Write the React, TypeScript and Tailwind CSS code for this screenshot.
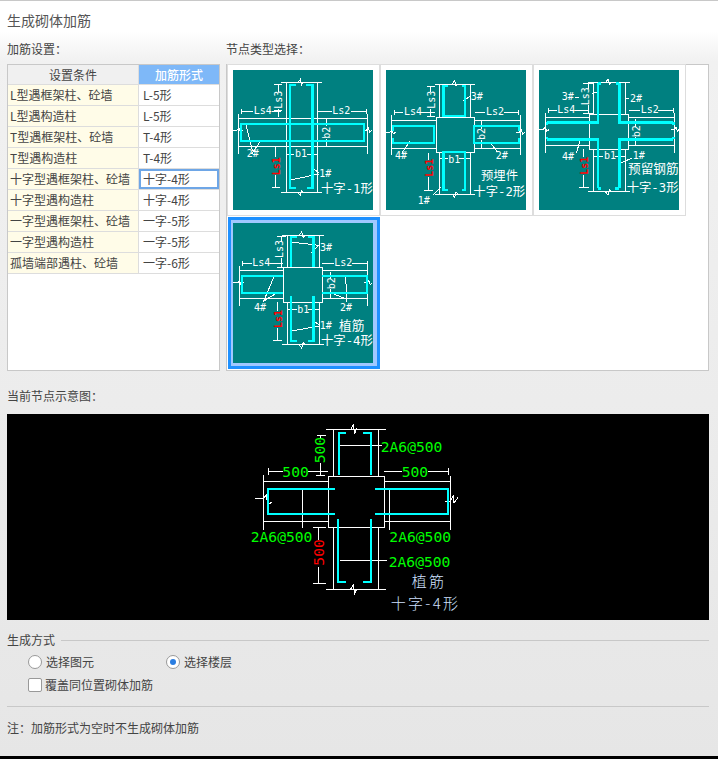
import React from 'react'

const rows = [
    ["L型遇框架柱、砼墙", "L-5形"],
    ["L型遇构造柱", "L-5形"],
    ["T型遇框架柱、砼墙", "T-4形"],
    ["T型遇构造柱", "T-4形"],
    ["十字型遇框架柱、砼墙", "十字-4形"],
    ["十字型遇构造柱", "十字-4形"],
    ["一字型遇框架柱、砼墙", "一字-5形"],
    ["一字型遇构造柱", "一字-5形"],
    ["孤墙端部遇柱、砼墙", "一字-6形"],
]

type Label = { t: string, x: number, y: number, c?: string, r?: boolean, s?: number }
type Node = { vb: string, white: string, cyan: string, labels: Label[] }

const nodes: Node[] = [
    {
        vb: "24 30 420 420",
        white: "M168 68H290M168 397H290M183 68V397M276 68V397M218 68L226 58L230 74L236 66M218 397L226 406L230 392L236 397M40 176H428M40 260H428M40 162V282M428 162V282M24 210H36L42 204L46 216L52 210M414 210H424L430 204L434 216L442 210M50 155H85M140 155H168M280 155H320M378 155H425M50 148V163M425 148V163M148 72H172M160 72V96M160 146V172M148 152H172M303 176V198M303 236V260M184 282H208M245 282H276M152 260V292M152 345V382M140 382H166M196 360L282 342M262 325L282 338M62 192L82 272M106 244L80 282",
        cyan: "M214 75H195V384H214M244 75H262V384H246M70 192H48V242H416V192H70",
        labels: [
            {t: "Ls4", x: 86, y: 162},
            {t: "Ls2", x: 322, y: 162},
            {t: "Ls3", x: 172, y: 146, r: true},
            {t: "b2", x: 316, y: 236, r: true},
            {t: "b1", x: 210, y: 292},
            {t: "Ls1", x: 166, y: 346, r: true, c: "#ff0000"},
            {t: "1#", x: 283, y: 350},
            {t: "2#", x: 65, y: 292},
            {t: "十字-1形", x: 288, y: 400, s: 37},
        ],
    },
    {
        vb: "18 30 420 420",
        white: "M168 172H284V278H168ZM165 72H285M165 402H285M178 72V172M272 72V172M178 278V402M272 278V402M216 72L224 62L228 78L234 72M216 402L224 412L228 396L234 402M34 180H168M34 264H168M284 180H422M284 264H422M34 166V284M422 166V284M18 216H30L36 210L40 222L48 216M408 216H418L424 210L428 222L436 216M44 158H70M124 158H165M284 158H316M372 158H416M44 150V166M416 150V166M140 78H166M152 78V96M152 146V170M140 170H166M303 180V206M303 240V264M178 296H204M236 296H272M146 278V300M146 350V390M132 390H160M248 124L272 108M184 380L160 405M90 244L66 278M330 246L352 276",
        cyan: "M204 78H190V168H255V78H246M204 390H190V276H255V390H246M50 198H162V248H50M50 198H38V212M50 248H38V234M405 198H282V248H405M405 198H416V212M405 248H416V234",
        labels: [
            {t: "Ls4", x: 72, y: 166},
            {t: "Ls2", x: 318, y: 166},
            {t: "Ls3", x: 164, y: 146, r: true},
            {t: "b2", x: 316, y: 240, r: true},
            {t: "b1", x: 205, y: 308},
            {t: "Ls1", x: 160, y: 350, r: true, c: "#ff0000"},
            {t: "3#", x: 272, y: 120},
            {t: "4#", x: 45, y: 298},
            {t: "2#", x: 347, y: 296},
            {t: "1#", x: 113, y: 432},
            {t: "预埋件", x: 303, y: 360, s: 37},
            {t: "十字-2形", x: 280, y: 408, s: 37},
        ],
    },
    {
        vb: "27 30 420 420",
        white: "M178 162H296V268H178ZM175 68H300M175 395H300M190 68V162M285 68V162M190 268V395M285 268V395M226 68L234 58L238 74L244 68M226 395L234 405L238 389L244 395M47 172H178M47 255H178M296 172H433M296 255H433M47 160V278M433 160V278M27 208H40L46 202L50 214L58 208M422 208H432L438 202L442 214L448 208M54 152H80M134 152H175M298 152H330M385 152H430M54 144V160M430 144V160M160 70H190M176 70V86M176 136V162M160 160H190M316 176V200M316 232V255M190 288H220M256 288H285M160 268V292M160 344V382M146 382H176M136 112H146M186 100L204 96M286 116H298M140 278L150 240M270 310L306 294",
        cyan: "M203 70V187H50M268 70V187H430M50 238H203V385M430 238H268V385M203 70H212M258 70H268M50 187V196M50 238V230M430 187V196M430 238V230M203 385H214M268 385H256",
        labels: [
            {t: "Ls4", x: 82, y: 160},
            {t: "Ls2", x: 332, y: 160},
            {t: "Ls3", x: 178, y: 136, r: true},
            {t: "b2", x: 329, y: 232, r: true},
            {t: "b1", x: 222, y: 298},
            {t: "Ls1", x: 174, y: 344, r: true, c: "#ff0000"},
            {t: "3#", x: 95, y: 120},
            {t: "2#", x: 300, y: 126},
            {t: "4#", x: 96, y: 300},
            {t: "1#", x: 308, y: 296},
            {t: "预留钢筋", x: 294, y: 340, s: 38},
            {t: "十字-3形", x: 290, y: 396, s: 37},
        ],
    },
    {
        vb: "24 33 420 420",
        white: "M175 165H292V270H175ZM172 70H296M172 397H296M187 70V165M282 70V165M187 270V397M282 270V397M222 70L230 60L234 76L240 70M222 397L230 408L234 392L240 397M42 175H175M42 258H175M292 175H428M292 258H428M42 162V282M428 162V282M24 212H38L44 206L48 218L56 212M416 212H426L432 206L436 218L442 212M52 155H80M134 155H175M292 155H326M382 155H426M52 147V163M426 147V163M155 72H182M168 72V90M168 138V165M155 165H182M316 180V200M316 232V258M187 292H216M250 292H282M158 270V296M158 348V386M144 386H172M196 90L282 100M258 122L282 100M196 358L282 342M262 325L282 338M146 196L115 270M150 246L115 268M316 242L366 262M362 196L366 270",
        cyan: "M215 74H198V165M248 74H265V165M175 192H50V242H175M292 192H425V242H292M198 252V386H215M265 252V386H250",
        labels: [
            {t: "Ls4", x: 82, y: 162},
            {t: "Ls2", x: 328, y: 162},
            {t: "Ls3", x: 174, y: 138, r: true},
            {t: "b2", x: 329, y: 232, r: true},
            {t: "b1", x: 217, y: 302},
            {t: "Ls1", x: 172, y: 348, r: true, c: "#ff0000"},
            {t: "3#", x: 285, y: 116},
            {t: "4#", x: 87, y: 296},
            {t: "2#", x: 345, y: 296},
            {t: "1#", x: 284, y: 350},
            {t: "植筋", x: 342, y: 354, s: 38},
            {t: "十字-4形", x: 288, y: 400, s: 37},
        ],
    },
]

function Diagram({node}: { node: Node }) {
    return (
        <svg viewBox={node.vb} width={140} height={140} className="block bg-[#008080] font-['DejaVu_Sans_Mono','Noto_Sans_CJK_SC',monospace]">
            <path d={node.white} fill="none" stroke="#ffffff" strokeWidth={3} shapeRendering="crispEdges"/>
            <path d={node.cyan} fill="none" stroke="#00ffff" strokeWidth={7} shapeRendering="crispEdges"/>
            {node.labels.map((l) => (
                <text
                    key={l.t}
                    x={l.x}
                    y={l.y}
                    fill={l.c ?? "#ffffff"}
                    fontSize={l.s ?? 30}
                    fontWeight={l.c ? "bold" : "normal"}
                    transform={l.r ? `rotate(-90 ${l.x} ${l.y})` : undefined}
                >{l.t}</text>
            ))}
        </svg>
    )
}

function Preview() {
    return (
        <svg viewBox="0 0 750 615" width={250} height={205} className="block ml-[223px] font-['DejaVu_Sans_Mono',monospace]">
            <path
                d="M295 183H463V338H295ZM288 43H468M288 522H468M310 43V183M445 43V183M310 338V522M445 338V522M362 43L370 30L374 58L380 40M362 522L370 510L374 536L380 522M100 198H295M100 320H295M463 198H662M463 320H662M100 180V345M662 182V345M76 250H100L110 240L112 268L126 262M646 258H662L670 240L672 264L684 248M325 90H455M218 222V340M478 225V345M330 436H470M115 168H158M115 158V180M235 168H295M463 168H515M595 168H655M655 158V180M262 62H288M272 62V72M272 145V180M258 180H285M248 338H288M265 338V375M265 455V505M248 505H288"
                fill="none" stroke="#ffffff" strokeWidth={3} shapeRendering="crispEdges"/>
            <path
                d="M348 55H328V180M400 55H423V180M315 222H115V298H315M435 222H655V298H435M325 312V502H348M423 312V502H400"
                fill="none" stroke="#00ffff" strokeWidth={6} shapeRendering="crispEdges"/>
            <g fill="#00ff00" fontSize={44}>
                <text x={452} y={112}>2A6@500</text>
                <text x={62} y={382}>2A6@500</text>
                <text x={478} y={380}>2A6@500</text>
                <text x={476} y={456}>2A6@500</text>
                <text x={157} y={185}>500</text>
                <text x={515} y={187}>500</text>
                <text x={286} y={145} transform="rotate(-90 286 145)">500</text>
            </g>
            <text x={281} y={452} fill="#ff0000" fontSize={44} transform="rotate(-90 281 452)">500</text>
            <text x={545} y={516} fill="#cfe0ff" fontSize={45} letterSpacing={7} className="font-['Noto_Sans_CJK_SC',sans-serif] font-light">植筋</text>
            <text x={482} y={582} fill="#cfe0ff" fontSize={45} letterSpacing={7} className="font-['Noto_Sans_CJK_SC',sans-serif] font-light">十字-4形</text>
        </svg>
    )
}

export default function App() {
    return (
        <div className="w-[718px] h-[759px] flex flex-col overflow-hidden text-[12px] text-[#444] border-t border-[#c8c8c8] bg-[linear-gradient(180deg,#ffffff_0px,#ffffff_30px,#f1f1f1_60px,#ececec_400px,#e6e6e6_759px)] font-['Noto_Sans_CJK_SC','Noto_Sans',sans-serif]">

            <div className="h-[38px] px-[7px] flex items-center text-[14px] text-[#555]">生成砌体加筋</div>

            <div className="flex pl-[7px] pr-[9px] gap-[6px]">
                <div className="w-[213px] flex flex-col">
                    <div className="h-[25px] leading-[20px]">加筋设置：</div>
                    <div className="h-[307px] bg-white border border-[#c8c8c8]">
                        <div className="flex h-[20px] leading-[20px] border-b border-[#ddd] text-center">
                            <div className="w-[131px] bg-[#f0f0f0] border-r border-[#ddd]">设置条件</div>
                            <div className="flex-1 bg-[#7eb8f8] text-white font-medium">加筋形式</div>
                        </div>
                        {rows.map((row, i) => (
                            <div className="flex h-[21px] leading-[20px] border-b border-[#ddd]" key={i}>
                                <div className="w-[131px] bg-[#fffce8] border-r border-[#ddd] pl-[2px] whitespace-nowrap">{row[0]}</div>
                                {i === 4
                                    ? <div className="flex-1 border-2 border-[#6ea6e6] pl-[2px] leading-[16px]">{row[1]}</div>
                                    : <div className="flex-1 pl-[4px]">{row[1]}</div>}
                            </div>
                        ))}
                    </div>
                </div>

                <div className="flex-1 flex flex-col">
                    <div className="h-[25px] leading-[20px]">节点类型选择：</div>
                    <div className="h-[307px] bg-white border border-[#c8c8c8]">
                        <div className="grid grid-cols-[repeat(3,153px)] content-start -mt-px">
                            {nodes.slice(0, 3).map((node, i) => (
                                <div className="h-[152px] p-[5px] border border-[#ddd]" key={i}>
                                    <Diagram node={node}/>
                                </div>
                            ))}
                            <div className="h-[152px] w-[152px] ml-px mt-px border-[3px] border-[#1e90ff]">
                                <div className="h-full pt-[3px] pl-[2px] bg-[#a0c8ff]">
                                    <Diagram node={nodes[3]}/>
                                </div>
                            </div>
                        </div>
                    </div>
                </div>
            </div>

            <div className="h-[43px] px-[7px] pt-[15px] leading-[20px]">当前节点示意图：</div>

            <div className="ml-[7px] mr-[9px] h-[206px] pt-px bg-black">
                <Preview/>
            </div>

            <div className="mt-[10px] pl-[7px] pr-[9px] h-[20px] flex items-center gap-[6px]">
                <span>生成方式</span>
                <div className="flex-1 h-px bg-[#c8c8c8]"/>
            </div>

            <div className="mt-[2px] h-[20px] pl-[28px] flex items-center">
                <div className="w-[14px] h-[14px] rounded-full bg-white border border-[#999]"/>
                <span className="ml-[4px] w-[120px]">选择图元</span>
                <div className="w-[14px] h-[14px] rounded-full bg-white border border-[#999] flex items-center justify-center">
                    <div className="w-[6px] h-[6px] rounded-full bg-[#2a7de1]"/>
                </div>
                <span className="ml-[4px]">选择楼层</span>
            </div>

            <div className="mt-[3px] h-[20px] pl-[28px] flex items-center">
                <div className="w-[14px] h-[14px] rounded-[2px] bg-white border border-[#999]"/>
                <span className="ml-[3px]">覆盖同位置砌体加筋</span>
            </div>

            <div className="mt-[11px] ml-[7px] mr-[9px] h-px bg-[#c8c8c8]"/>

            <div className="mt-[11px] px-[7px] h-[20px] leading-[20px]">注：加筋形式为空时不生成砌体加筋</div>

            <div className="mt-auto h-[3px] bg-black"/>
        </div>
    )
}
